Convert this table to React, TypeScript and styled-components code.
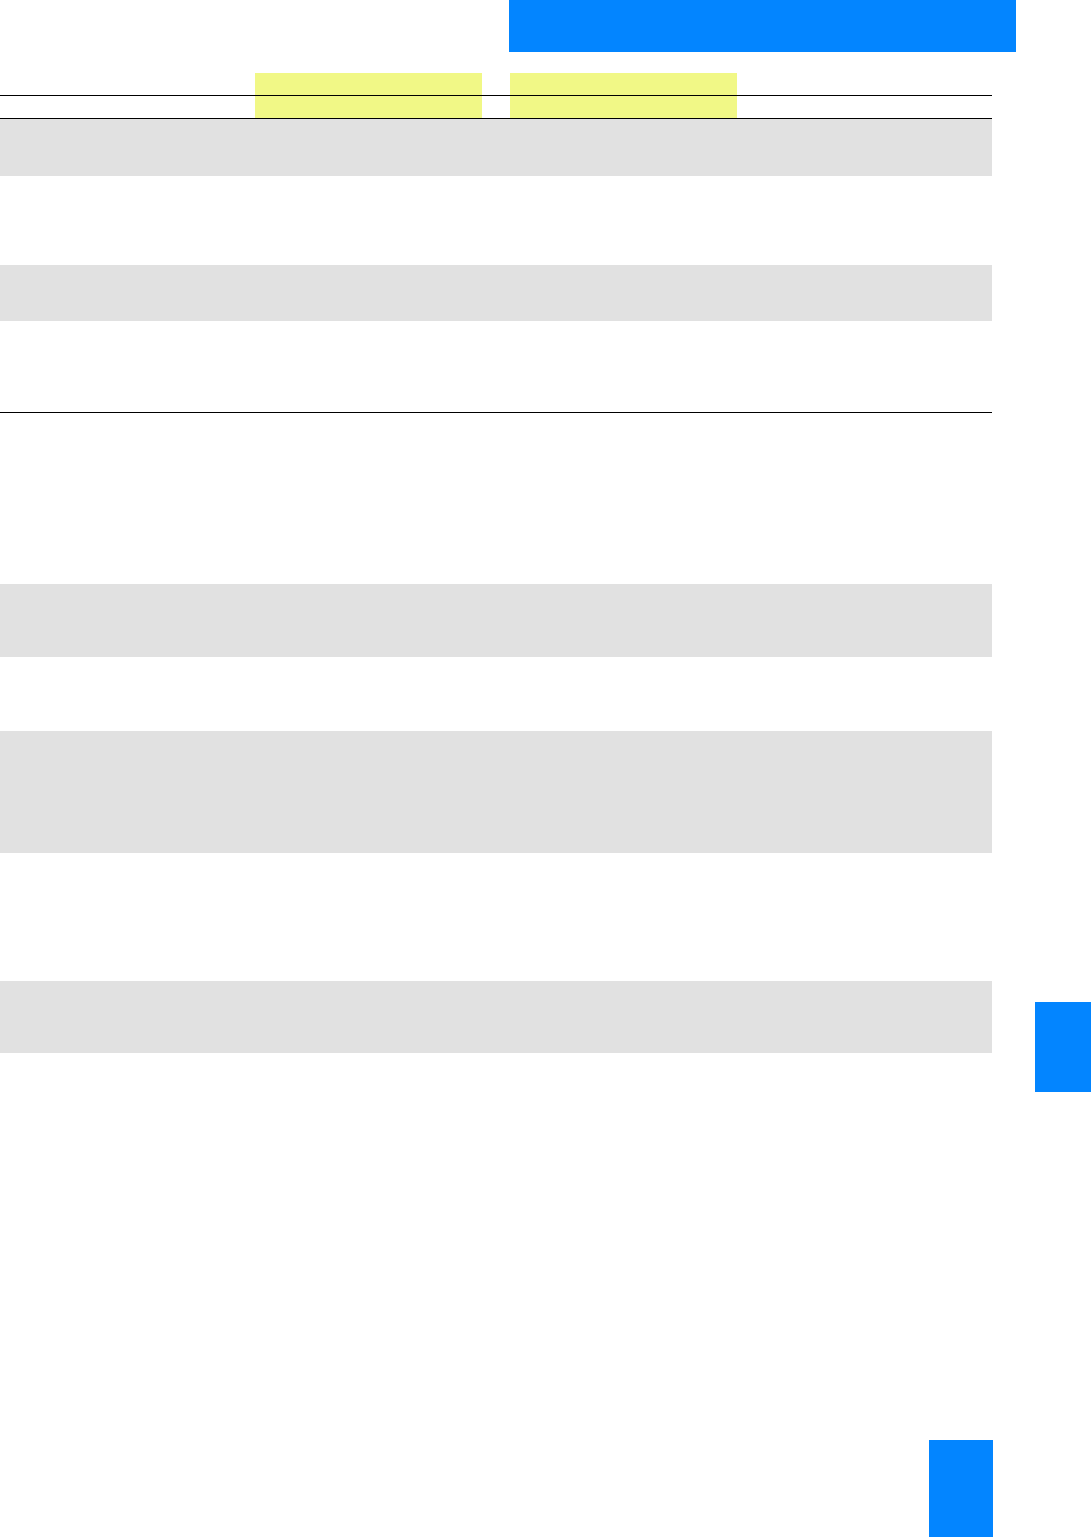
import React from "react";
import styled, { createGlobalStyle } from "styled-components";

const Global = createGlobalStyle`
  html, body {
    margin: 0;
    padding: 0;
    background: #fff;
    font-family: "Liberation Sans", Arial, sans-serif;
  }
`;

const BLUE = "#0385ff";
const YELLOW = "#f1f886";
const GRAY = "#e1e1e1";

const Page = styled.div`
  position: relative;
  width: 1091px;
  min-height: 1537px;
  display: flex;
  flex-direction: column;
  overflow: hidden;
`;

const Header = styled.div`
  height: 52px;
  display: flex;
  padding-left: 509px;
`;

const TitleBand = styled.div`
  width: 507px;
  background: ${BLUE};
`;

const Content = styled.div`
  width: 992px;
  margin-top: 21px;
  display: flex;
  flex-direction: column;
`;

const TabHead = styled.div`
  position: relative;
  height: 45px;
  display: flex;
  padding-left: 255px;
  gap: 28px;
  border-bottom: 1px solid #000;
`;

const Tab = styled.div`
  width: 227px;
  background: ${YELLOW};
`;

const HeadRule = styled.div`
  position: absolute;
  left: 0;
  right: 0;
  top: 22px;
  height: 1px;
  background: #000;
`;

const Band = styled.div<{ $h: number; $gap: number }>`
  height: ${(p) => p.$h}px;
  margin-top: ${(p) => p.$gap}px;
  background: ${GRAY};
`;

const Rule = styled.div<{ $gap: number }>`
  height: 1px;
  margin-top: ${(p) => p.$gap}px;
  background: #000;
`;

const ThumbTab = styled.div`
  position: absolute;
  left: 1035px;
  top: 1002px;
  width: 56px;
  height: 90px;
  background: ${BLUE};
`;

const Footer = styled.div`
  margin-top: auto;
  display: flex;
  padding-left: 929px;
`;

const PageNumber = styled.div`
  width: 64px;
  height: 97px;
  background: ${BLUE};
`;

export default function App() {
  return (
    <>
      <Global />
      <Page>
        <Header>
          <TitleBand />
        </Header>
        <Content>
          <TabHead>
            <Tab />
            <Tab />
            <HeadRule />
          </TabHead>
          <Band $h={57} $gap={0} />
          <Band $h={56} $gap={89} />
          <Rule $gap={91} />
          <Band $h={73} $gap={171} />
          <Band $h={122} $gap={74} />
          <Band $h={72} $gap={128} />
        </Content>
        <ThumbTab />
        <Footer>
          <PageNumber />
        </Footer>
      </Page>
    </>
  );
}
